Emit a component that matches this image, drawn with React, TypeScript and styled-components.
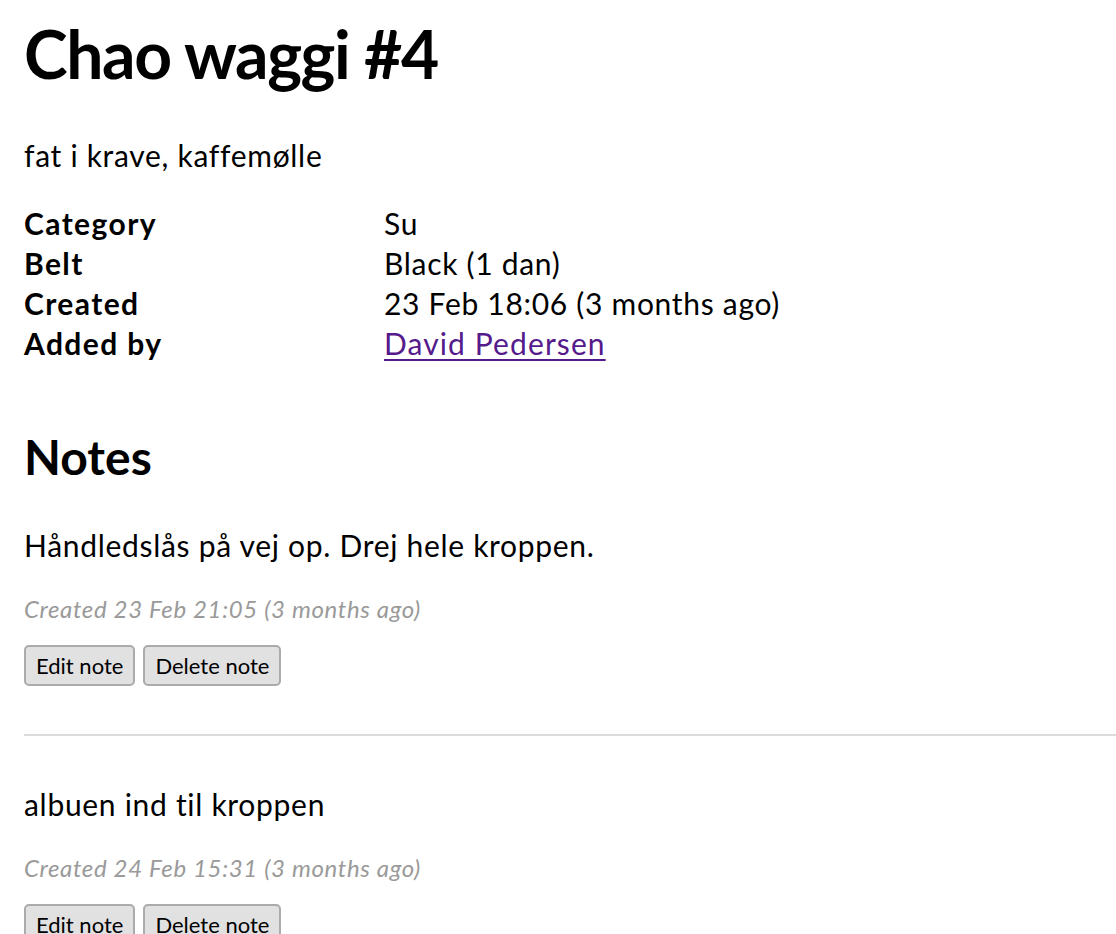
import React from "react";
import styled, { createGlobalStyle } from "styled-components";

const Global = createGlobalStyle`
  html, body { margin: 0; padding: 0; background: #fff; }
  body {
    font-family: Lato, "Noto Sans", "Liberation Sans", sans-serif;
    color: #000;
    overflow: hidden;
  }
`;

const Page = styled.main`
  padding: 11px 0 0 24px;
`;

const Title = styled.h1`
  margin: 0;
  font-size: 66px;
  line-height: 86px;
  font-weight: 700;
  letter-spacing: -1.4px;
`;

const Lead = styled.p`
  margin: 38px 0 0;
  font-size: 30px;
  line-height: 40px;
  letter-spacing: 0.7px;
`;

const Details = styled.dl`
  margin: 28px 0 0;
  display: grid;
  grid-template-columns: 360px auto;
  font-size: 30px;
  line-height: 40px;
`;

const Term = styled.dt`
  font-weight: 700;
  margin: 0;
  letter-spacing: 1.4px;
`;

const Desc = styled.dd`
  margin: 0;
  letter-spacing: 0.7px;
`;

const Link = styled.a`
  color: #551a8b;
  text-decoration: underline;
  text-underline-offset: 4px;
  text-decoration-thickness: 2px;
  letter-spacing: 1.1px;
`;

const SectionTitle = styled.h2`
  margin: 66px 0 0;
  font-size: 48px;
  line-height: 56px;
  font-weight: 700;
`;

const NoteList = styled.div`
  margin-top: 40px;
`;

const Note = styled.article<{ $last?: boolean }>`
  padding-bottom: ${(p) => (p.$last ? "0" : "48px")};
  margin-bottom: ${(p) => (p.$last ? "0" : "48px")};
  border-bottom: ${(p) => (p.$last ? "none" : "2px solid #dcdcdc")};
`;

const NoteText = styled.p`
  margin: 0;
  font-size: 30px;
  line-height: 40px;
  letter-spacing: 0.7px;
`;

const Meta = styled.p`
  margin: 27px 0 0;
  font-size: 24px;
  line-height: 34px;
  font-style: italic;
  color: #9a9a9a;
  letter-spacing: 0.65px;
`;

const Actions = styled.div`
  margin-top: 19px;
  display: flex;
  gap: 8px;
`;

const Button = styled.button`
  font-family: inherit;
  font-size: 22px;
  height: 41px;
  padding: 0 10px;
  background: #e1e1e1;
  border: 2px solid #ababab;
  border-radius: 5px;
  color: #000;
`;

const notes = [
  { text: "Håndledslås på vej op. Drej hele kroppen.", created: "Created 23 Feb 21:05 (3 months ago)" },
  { text: "albuen ind til kroppen", created: "Created 24 Feb 15:31 (3 months ago)" },
];

export default function App() {
  return (
    <>
      <Global />
      <Page>
        <Title>Chao waggi #4</Title>
        <Lead>fat i krave, kaffemølle</Lead>
        <Details>
          <Term>Category</Term>
          <Desc>Su</Desc>
          <Term>Belt</Term>
          <Desc>Black (1 dan)</Desc>
          <Term>Created</Term>
          <Desc>23 Feb 18:06 (3 months ago)</Desc>
          <Term>Added by</Term>
          <Desc>
            <Link href="#">David Pedersen</Link>
          </Desc>
        </Details>
        <SectionTitle>Notes</SectionTitle>
        <NoteList>
          {notes.map((n, i) => (
            <Note key={i} $last={i === notes.length - 1}>
              <NoteText>{n.text}</NoteText>
              <Meta>{n.created}</Meta>
              <Actions>
                <Button>Edit note</Button>
                <Button>Delete note</Button>
              </Actions>
            </Note>
          ))}
        </NoteList>
      </Page>
    </>
  );
}
